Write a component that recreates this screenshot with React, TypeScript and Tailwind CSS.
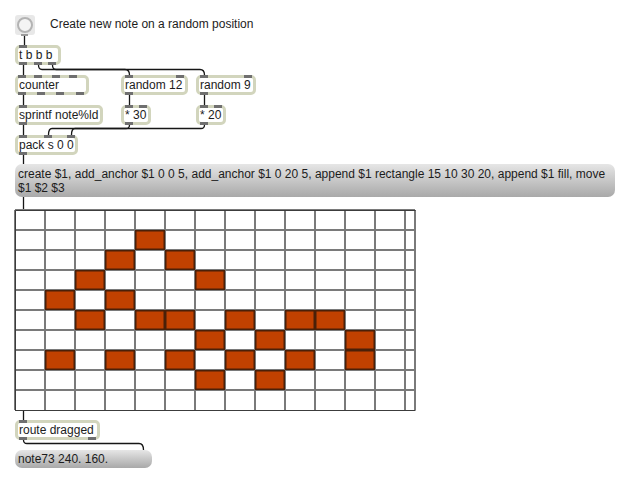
import React from 'react';

type Box = { text: string; x: number; y: number; w: number; ins: number[]; outs: number[] };

// patcher objects, inlet/outlet offsets measured from the box's left edge
const BOXES: Box[] = [
  { text: 't b b b', x: 15, y: 45, w: 46, ins: [4], outs: [4, 19, 33] },
  { text: 'counter', x: 15, y: 75, w: 74, ins: [3, 19, 37, 54], outs: [3, 22, 41, 61] },
  { text: 'random 12', x: 121, y: 75, w: 67, ins: [4, 55], outs: [4] },
  { text: 'random 9', x: 196, y: 75, w: 60, ins: [4, 48], outs: [4] },
  { text: 'sprintf note%ld', x: 15, y: 105, w: 88, ins: [4], outs: [4] },
  { text: '* 30', x: 121, y: 105, w: 30, ins: [4, 18], outs: [4] },
  { text: '* 20', x: 196, y: 105, w: 30, ins: [4, 18], outs: [4] },
  { text: 'pack s 0 0', x: 15, y: 135, w: 63, ins: [4, 29, 52], outs: [4] },
  { text: 'route dragged', x: 15, y: 420, w: 85, ins: [4], outs: [4, 73] },
];

const CABLES = [
  'M24.5 35 V45',
  'M23.5 65 V75',
  'M38.5 65 Q38.5 69.5 42 69.5 H125 Q129.5 69.5 129.5 75',
  'M52.5 65 Q52.5 69.5 56 69.5 H200 Q204.5 69.5 204.5 75',
  'M23.5 95 V105',
  'M129.5 95 V105',
  'M204.5 95 V105',
  'M23.5 125 V135',
  'M129.5 125 Q129.5 128.5 126 128.5 H52 Q48.5 128.5 48.5 135',
  'M204.5 125 Q204.5 128.5 201 128.5 H75 Q71.5 128.5 71.5 135',
  'M23.5 155 V164',
  'M23.5 197 V210',
  'M23.5 410 V420',
  'M23.5 440 Q23.5 443.5 27 443.5 H139 Q143.5 443.5 143.5 450',
];

// [row, col] of the filled cells
const CELLS: [number, number][] = [
  [1, 4],
  [2, 3], [2, 5],
  [3, 2], [3, 6],
  [4, 1], [4, 3],
  [5, 2], [5, 4], [5, 5], [5, 7], [5, 9], [5, 10],
  [6, 6], [6, 8], [6, 11],
  [7, 1], [7, 3], [7, 5], [7, 7], [7, 9], [7, 11],
  [8, 6], [8, 8],
];

const ObjectBox: React.FC<{ box: Box }> = ({ box }) => (
  <div
    className="absolute h-[20px] rounded-[5px] border-[3px] border-[#d2d5bd] bg-white pl-[1px] leading-[14px] whitespace-nowrap"
    style={{ left: box.x, top: box.y, width: box.w }}
  >
    {box.text}
    {box.ins.map((o) => (
      <span key={`i${o}`} className="absolute top-[-3px] h-[3px] w-[8px] bg-[#6f6f6f]" style={{ left: o - 3 }} />
    ))}
    {box.outs.map((o) => (
      <span key={`o${o}`} className="absolute bottom-[-3px] h-[3px] w-[8px] bg-[#6f6f6f]" style={{ left: o - 3 }} />
    ))}
  </div>
);

const NoteGrid: React.FC = () => (
  <svg width="402" height="202" viewBox="-1 -1 402 202" className="absolute left-[14px] top-[209px]">
    <rect x="0" y="0" width="400" height="200" fill="#ffffff" />
    {Array.from({ length: 14 }, (_, i) => (
      <line key={`v${i}`} x1={30 * i} y1="0" x2={30 * i} y2="200" stroke="#7a7a7a" strokeWidth="2" />
    ))}
    <line x1="400" y1="0" x2="400" y2="200" stroke="#7a7a7a" strokeWidth="2" />
    {Array.from({ length: 10 }, (_, j) => (
      <line key={`h${j}`} x1="0" y1={20 * j} x2="400" y2={20 * j} stroke="#7a7a7a" strokeWidth="2" />
    ))}
    {CELLS.map(([r, c]) => (
      <rect
        key={`${r}-${c}`}
        x={30 * c + 0.75}
        y={20 * r + 0.75}
        width="28.5"
        height="18.5"
        fill="#c14100"
        stroke="#4a2008"
        strokeWidth="1.5"
      />
    ))}
    <path d="M0.5 200.5 V0.5 H400.5 M0 200.5 H400.5" stroke="#3c3c3c" strokeWidth="1" fill="none" />
  </svg>
);

export default function App() {
  return (
    <div className="relative w-[633px] h-[482px] overflow-hidden bg-white font-['Liberation_Sans',Arial,sans-serif] text-[12px] text-[#1c1c1c]">
      {/* patch cords */}
      <svg width="633" height="482" className="absolute left-0 top-0 pointer-events-none">
        {CABLES.map((d) => (
          <path key={d} d={d} stroke="#161616" strokeWidth="1.3" fill="none" />
        ))}
      </svg>

      {/* bang button + comment */}
      <div className="absolute left-[15px] top-[15px] w-[20px] h-[20px] rounded-[3px] bg-[#e8e8e8] flex items-center justify-center">
        <div className="w-[16px] h-[16px] rounded-full border-[2px] border-[#b3b3b3] bg-[#f4f4f4]" />
        <span className="absolute bottom-[-1px] left-[6px] h-[2px] w-[7px] bg-[#9a9a9a]" />
      </div>
      <div className="absolute left-[50px] top-[17px] leading-[14px]">Create new note on a random position</div>

      {BOXES.map((b) => (
        <ObjectBox key={b.text} box={b} />
      ))}

      {/* message boxes */}
      <div className="absolute left-[15px] top-[164px] w-[600px] h-[33px] rounded-[7px] bg-gradient-to-b from-[#e6e6e6] to-[#a9a9a9] pl-[3px] pt-[3px] leading-[14px]">
        create $1, add_anchor $1 0 0 5, add_anchor $1 0 20 5, append $1 rectangle 15 10 30 20, append $1 fill, move
        <br />
        $1 $2 $3
      </div>

      <NoteGrid />

      <div className="absolute left-[15px] top-[450px] w-[137px] h-[18px] rounded-[7px] bg-gradient-to-b from-[#e6e6e6] to-[#a9a9a9] pl-[3px] leading-[18px]">
        note73 240. 160.
      </div>
    </div>
  );
}
